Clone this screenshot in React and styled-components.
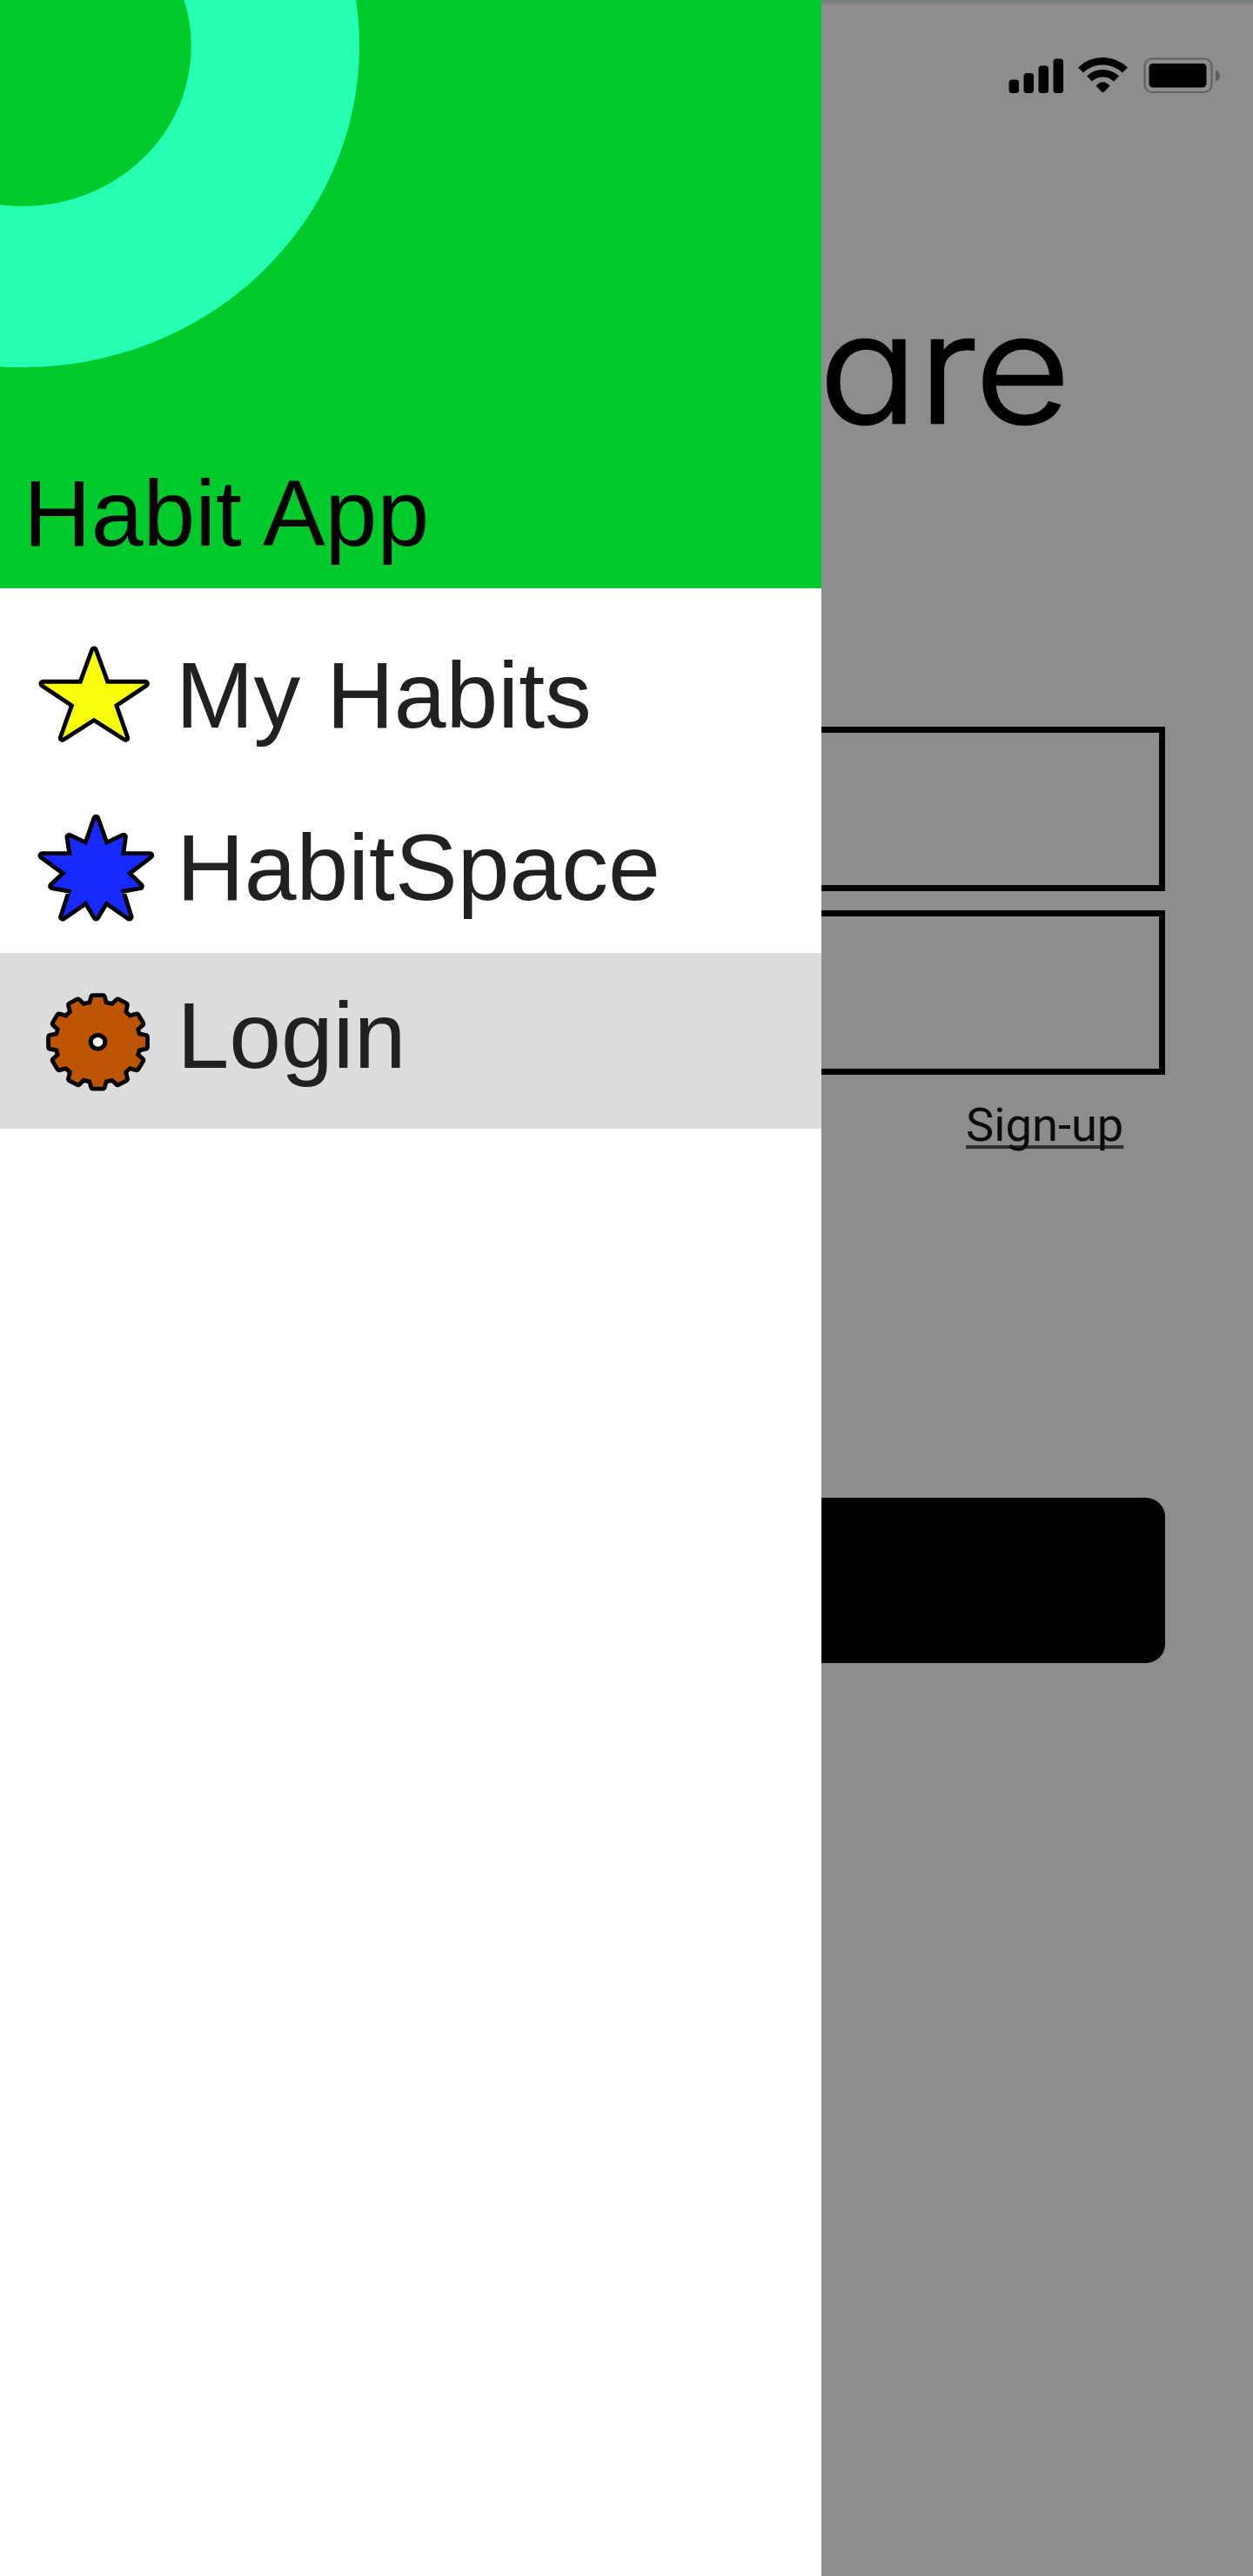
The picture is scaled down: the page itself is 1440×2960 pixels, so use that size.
import React from "react";
import styled, { createGlobalStyle } from "styled-components";

const GlobalStyle = createGlobalStyle`
  * { box-sizing: border-box; }
  body { margin: 0; background: #8d8d8d; }
`;

const Screen = styled.div`
  display: grid;
  grid-template-columns: 944px 496px;
  width: 1440px;
  height: 2960px;
  overflow: hidden;
  font-family: "Liberation Sans", Arial, sans-serif;
`;

const Drawer = styled.aside`
  background: #fff;
`;

const DrawerHeader = styled.header`
  position: relative;
  display: flex;
  flex-direction: column;
  justify-content: flex-end;
  height: 676px;
  padding: 0 27px 26px;
  background: #00c92c;
`;

const Ring = styled.svg`
  position: absolute;
  top: 0;
  left: 0;
`;

const AppTitle = styled.h1`
  position: relative;
  margin: 0;
  font-size: 107.5px;
  line-height: 120px;
  font-weight: 400;
  color: #000;
  white-space: nowrap;
`;

const Menu = styled.nav`
  display: flex;
  flex-direction: column;
  padding-top: 28px;
`;

const MenuItem = styled.a`
  display: flex;
  align-items: flex-start;
  height: ${(p) => p.$height}px;
  padding-left: 20px;
  background: ${(p) => (p.$active ? "#dcdcdc" : "transparent")};
`;

const MenuIcon = styled.svg`
  display: block;
  flex: none;
  width: 180px;
  height: ${(p) => p.$height}px;
  margin-top: ${(p) => p.$top}px;
`;

const MenuLabel = styled.span`
  padding: 35px 0 0 ${(p) => p.$indent}px;
  font-size: 107.5px;
  line-height: 120px;
  color: #212121;
  white-space: nowrap;
`;

const Page = styled.main`
  display: flex;
  flex-direction: column;
  background: linear-gradient(#757f7c 0, #7c8280 3px, #8d8d8d 6px);
`;

const StatusBar = styled.div`
  display: flex;
  justify-content: flex-end;
  height: 140px;
  padding: 60px 34px 0 0;
`;

const StatusIcons = styled.svg`
  display: block;
  width: 252px;
  height: 54px;
`;

const Brand = styled.h2`
  height: 220px;
  margin: 173px 0 0 -3px;
  font-family: Inter, sans-serif;
  font-feature-settings: "cv11";
  font-size: 174px;
  line-height: 220px;
  font-weight: 300;
  color: #000;
  -webkit-text-stroke: 2.5px #000;
  transform: scaleX(1.09);
  transform-origin: left;
`;

const Form = styled.div`
  display: flex;
  flex-direction: column;
  align-items: flex-start;
  padding-top: 302px;
`;

const Field = styled.div`
  width: 394.5px;
  height: 189px;
  margin-bottom: 22px;
  border: solid #000;
  border-width: 7px 7px 7px 0;
`;

const SignUp = styled.a`
  margin: 4px 0 0 166px;
  font-family: Roboto, sans-serif;
  font-size: 54.3px;
  line-height: 64px;
  color: #0c0c0c;
  white-space: nowrap;
  text-decoration: underline;
  text-decoration-color: #303030;
  text-decoration-thickness: 4px;
  text-underline-offset: 5px;
  text-decoration-skip-ink: none;
`;

const Submit = styled.div`
  width: 395px;
  height: 190px;
  margin-top: 396px;
  border-radius: 0 22px 22px 0;
  background: #000;
`;

const outline = {
  stroke: "#000",
  strokeWidth: 29,
  strokeLinejoin: "round",
  paintOrder: "stroke",
};

const Star = () => (
  <MenuIcon viewBox="0 0 540 450" $height={150} $top={16}>
    <polygon
      {...outline}
      fill="#f9ff0b"
      points="264,82 306,197 441,197 333,269 373,384 264,314 155,384 196,269 88,197 222,197"
    />
  </MenuIcon>
);

const Burst = () => (
  <MenuIcon viewBox="0 0 540 480" $height={160} $top={8}>
    <polygon
      {...outline}
      fill="#162aff"
      points="271,92 304,184 366,155 357,219 457,219 377,280 423,325 357,337 386,431 305,375 271,431 238,375 156,431 187,337 120,325 168,280 85,219 188,219 178,155 239,184"
    />
  </MenuIcon>
);

const gearQuadrant = [
  [294, 198], [301, 222], [329, 228], [346, 211], [372, 225], [366, 250],
  [386, 269], [411, 262], [427, 289], [408, 306], [415, 330], [441, 335],
];
const flipY = ([x, y]) => [x, 704 - y];
const flipX = ([x, y]) => [555 - x, y];
const lowerRight = gearQuadrant.map(flipY).reverse();
const rightHalf = [...gearQuadrant, ...lowerRight];
const gearPoints = [...rightHalf, ...rightHalf.map(flipX).reverse()]
  .map((p) => p.join(","))
  .join(" ");

const Gear = () => (
  <MenuIcon viewBox="0 150 540 450" $height={150} $top={35}>
    <polygon {...outline} fill="#bd5500" points={gearPoints} />
    <ellipse cx="277.5" cy="352" rx="25" ry="23.5" fill="#fff" stroke="#000" strokeWidth="15" />
  </MenuIcon>
);

export default function App() {
  return (
    <>
      <GlobalStyle />
      <Screen>
        <Drawer>
          <DrawerHeader>
            <Ring width="450" height="440" viewBox="0 0 450 440">
              <ellipse cx="26.5" cy="53" rx="386.5" ry="369" fill="#24ffb2" />
              <ellipse cx="26.5" cy="53" rx="193.2" ry="184" fill="#00c92c" />
            </Ring>
            <AppTitle>Habit App</AppTitle>
          </DrawerHeader>
          <Menu>
            <MenuItem $height={198}>
              <Star />
              <MenuLabel $indent={2}>My Habits</MenuLabel>
            </MenuItem>
            <MenuItem $height={193}>
              <Burst />
              <MenuLabel $indent={3}>HabitSpace</MenuLabel>
            </MenuItem>
            <MenuItem $height={202} $active>
              <Gear />
              <MenuLabel $indent={3.5}>Login</MenuLabel>
            </MenuItem>
          </Menu>
        </Drawer>
        <Page>
          <StatusBar>
            <StatusIcons viewBox="1154 60 252 54">
              <rect x="1159.5" y="91.5" width="11.5" height="15.5" rx="3.5" />
              <rect x="1176.5" y="84" width="11.5" height="23" rx="3.5" />
              <rect x="1193.5" y="75.5" width="11.5" height="31.5" rx="3.5" />
              <rect x="1210.5" y="67.5" width="11.5" height="39.5" rx="3.5" />
              <g fill="none" stroke="#000" strokeWidth="8.5">
                <path d="M1242 80.5A37 37 0 0 1 1293 80.5" />
                <path d="M1252 90.5A22.5 22.5 0 0 1 1283 90.5" />
              </g>
              <path d="M1259.5 98.5Q1267.5 90 1275.5 98.5L1269 105.5Q1267.5 107 1266 105.5Z" />
              <rect x="1315.5" y="67.5" width="77" height="38.5" rx="8.5" fill="none" stroke="#626262" strokeWidth="2.2" />
              <rect x="1320.5" y="73" width="66" height="27.5" rx="4.5" />
              <path d="M1397 80.5Q1402 82 1402 87T1397 93.5Z" fill="#5f5f5f" />
            </StatusIcons>
          </StatusBar>
          <Brand>are</Brand>
          <Form>
            <Field />
            <Field />
            <SignUp>Sign-up</SignUp>
            <Submit />
          </Form>
        </Page>
      </Screen>
    </>
  );
}
